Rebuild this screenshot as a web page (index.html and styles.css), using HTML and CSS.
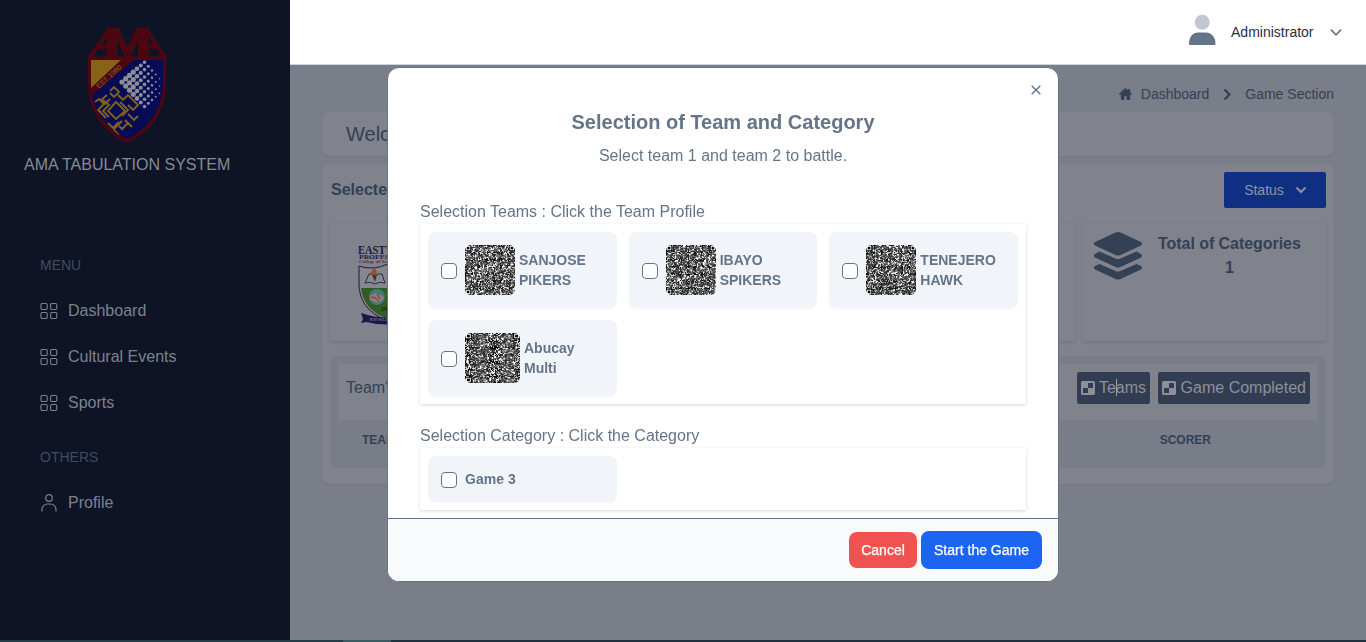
FILE: index.html
```html
<!DOCTYPE html>
<html lang="en">
<head>
<meta charset="utf-8">
<title>AMA Tabulation System</title>
<link rel="stylesheet" href="styles.css">
</head>
<body>
<svg width="0" height="0" class="defs">
  <symbol id="grid" viewBox="0 0 18 18"><g fill="none" stroke="currentColor" stroke-width="1.1"><rect x="1" y="1.500" width="6.200" height="6" rx="1.2"/><rect x="10.600" y="1.500" width="6.200" height="6" rx="1.2"/><rect x="1" y="10.500" width="6.200" height="6" rx="1.2"/><rect x="10.600" y="10.500" width="6.200" height="6" rx="1.2"/></g></symbol>
  <symbol id="chess" viewBox="0 0 14 14"><path fill="currentColor" fill-rule="evenodd" d="M1.5 0h11A1.5 1.5 0 0 1 14 1.500v11a1.500 1.500 0 0 1-1.500 1.500h-11A1.500 1.500 0 0 1 0 12.500v-11A1.500 1.500 0 0 1 1.500 0zM7 2v5h5V2zM2 7v5h5V7z"/></symbol>
  <symbol id="chev" viewBox="0 0 12 8"><path d="M1.500 1.500 6 6l4.500-4.500" fill="none" stroke="currentColor"/></symbol>
</svg>
<div class="app">
  <aside class="sidebar">
    <div class="brand">
      <svg class="crest" viewBox="0 0 80 118" width="80" height="118">
        <defs><clipPath id="shield"><path d="M4 34h72v22C76 82 63 102 40 113 17 102 4 82 4 56z"/></clipPath></defs>
        <g font-family="Liberation Sans" font-size="39" fill="#4b0610" stroke="#4b0610" stroke-width="2.400">
          <text transform="translate(2 30) skewX(-19)" textLength="21" lengthAdjust="spacingAndGlyphs">A</text>
          <text transform="translate(20.500 30)" textLength="39" lengthAdjust="spacingAndGlyphs">M</text>
          <text transform="translate(57 30) skewX(19)" textLength="21" lengthAdjust="spacingAndGlyphs">A</text>
        </g>
        <path d="M1 30.500h78V57C79 85 64 106 40 117 16 106 1 85 1 57z" fill="#4b0610"/>
        <g clip-path="url(#shield)">
          <path d="M4 33h31L4 62z" fill="#876315"/>
          <path d="M48 33h30v84H20L2 72z" fill="#060b55"/>
          <g id="dots" fill="#8b8e99"></g>
          <g fill="none" stroke="#80611c" stroke-width="1.900">
            <path d="m23 65 4-4 5 5-5 5-4-4m-3 2-6 5 4 4 5-5M8 76l4-3 5 5-6 6 8 8m-3-18 6 5-6 6 6 6m-6-2-5-6m20-14 5 5 5-5 10 10-5 5-5-5m-8-3 8 8-6 6m-14 7 6 6 8-8m-13 10 4 4m0-7 6-6m3 7 6-6m-3-3 7 7m-4-13 6 6 4-4m-24 14 5 5m0-9 4 4"/>
            <path d="m29 76 9 9-9 8-8-8z"/>
          </g>
          <path d="m29 78 7 7-7 6-6-6z" fill="#060b55"/>
        </g>
        <text transform="translate(12 63) rotate(-42)" font-family="Liberation Sans" font-size="7" fill="#876a3a" textLength="31">EST. 1980</text>
      </svg>
      <div class="brand-name">AMA TABULATION SYSTEM</div>
    </div>
    <nav>
      <h3>MENU</h3>
      <a><svg width="18" height="18"><use href="#grid"/></svg>Dashboard</a>
      <a><svg width="18" height="18"><use href="#grid"/></svg>Cultural Events</a>
      <a><svg width="18" height="18"><use href="#grid"/></svg>Sports</a>
      <h3 class="others">OTHERS</h3>
      <a><svg width="18" height="18" viewBox="0 0 18 18" fill="none" stroke="currentColor" stroke-width="1.200"><circle cx="9" cy="4" r="3.300"/><path d="M2 17.500v-2A5.500 5.500 0 0 1 7.500 10h3a5.500 5.500 0 0 1 5.500 5.500v2"/></svg>Profile</a>
    </nav>
  </aside>
  <div class="page">
    <header class="topbar">
      <svg width="28" height="32" viewBox="0 0 28 32"><circle cx="14.200" cy="8.300" r="7.500" fill="#c0c6d2"/><path d="M1 30C1 22.500 5 18.500 10 18.500h8c5 0 9.500 4 9.500 11.500q0 1-1 1h-24.500q-1 0-1-1z" fill="#64748b"/></svg>
      <span>Administrator</span>
      <svg class="down" width="14" height="9" viewBox="0 0 12 8"><use href="#chev"/></svg>
    </header>
    <main>
      <div class="crumbs">
        <svg width="13" height="12" viewBox="0 0 14 13"><path fill="currentColor" d="M7 0 0 6.300l.8.900H2V12q0 1 1 1h2.700V9h2.600v4H11q1 0 1-1V7.200h1.200l.8-.9-2-1.800V1h-2v1.700z"/></svg>
        <span>Dashboard</span>
        <svg class="sep" width="9" height="13" viewBox="0 0 9 13"><path d="m1.500 1.500 5 5-5 5" fill="none" stroke="currentColor" stroke-width="2.200"/></svg>
        <span>Game Section</span>
      </div>
      <section class="card welcome">Welcome</section>
      <section class="card board">
        <div class="board-head"><b>Selected</b><button class="status">Status <svg width="12" height="8" stroke-width="2"><use href="#chev"/></svg></button></div>
        <div class="stats">
          <div class="stat school">
            <svg width="70" height="84" viewBox="0 0 70 84">
              <g font-family="Liberation Serif" font-weight="bold"><text x="0" y="10.500" font-size="13" fill="#1d1746" textLength="62" lengthAdjust="spacingAndGlyphs">EASTWOOD</text><text x="1" y="15.500" font-size="6" fill="#1d1746" textLength="59" lengthAdjust="spacingAndGlyphs">PROFESSIONAL</text><text x="1" y="20" font-size="5" fill="#77202c">College of Science and Tech</text></g>
              <path d="M1 23q14 5 29-2 15 7 29 2v17c0 18-9 30-29 38C10 70 1 58 1 40z" fill="#85868e" stroke="#1d1746"/>
              <path d="M3 45h54C55 61 46 70 30 76 14 70 5 61 3 45z" fill="#315d20"/>
              <path d="M7 40 11 31q4-1 6 2 3-3 7-2l3 9q-6-2-10 1-4-3-10-1z" fill="#888992" stroke="#292b42"/>
              <path d="M16 25q4 3 2 7h-4q-2-3 2-7z" fill="#a44b16"/><path d="m14 32 3 7 2-7z" fill="#373a42"/>
              <circle cx="19" cy="54" r="8" fill="#397b82"/><path d="m12 53 5-3 8 3 1 3-6 4-8-3z" fill="#9c7770"/><path d="m13 54 5 1 3 4m-2-8 3 5" stroke="#633e3e" fill="none"/>
              <text x="23" y="68" font-family="Liberation Serif" font-size="6" font-weight="bold" fill="#16213b">1994</text>
              <path d="M3 70q26 9 54 0l2 7q-27 8-51 2l-5 1 2-4z" fill="#1d1746"/><text x="12" y="78" font-family="Liberation Serif" font-size="4" fill="#95959e">KNOWLEDGE</text>
            </svg>
          </div>
          <div class="stat"></div><div class="stat"></div>
          <div class="stat total">
            <svg width="50" height="48" viewBox="0 0 50 48" fill="#334056"><path d="M22.500.6q2.500-1 5 0L48 10q2 1.200 0 3.500L27.500 23q-2.500 1-5 0L2 13.500q-2.200-2.300 0-3.500z"/><path d="m6.500 19.500 16 7q2.500 1 5 0l16-7L48 22q2 1.200 0 3.500L27.500 35q-2.500 1-5 0L2 25.500Q-.2 23.200 2 22z"/><path d="m6.500 32 16 7q2.500 1 5 0l16-7 4.500 2q2 1.200 0 3.500l-20.500 9.500q-2.500 1-5 0L2 37.500Q-.2 35.200 2 34z"/></svg>
            <div>Total of Categories<br>1</div>
          </div>
        </div>
        <div class="table">
          <div class="tools"><span class="tt">Team's</span><span class="pill teams"><svg width="14" height="14"><use href="#chess"/></svg>Teams<i class="caret"></i></span><span class="pill"><svg width="14" height="14"><use href="#chess"/></svg>Game Completed</span></div>
          <div class="thead"><span>TEAM</span><span>SCORER</span></div>
        </div>
      </section>
    </main>
  </div>
</div>
<div class="strip"></div>
<div class="overlay">
  <div class="modal" role="dialog">
    <div class="modal-body">
      <svg class="close" width="10" height="10" viewBox="0 0 10 10"><path d="m.7.7 8.600 8.600m0-8.600L.7 9.300" stroke="#64748b" stroke-width="1.400"/></svg>
      <h2>Selection of Team and Category</h2>
      <p>Select team 1 and team 2 to battle.</p>
      <div class="label">Selection Teams : Click the Team Profile</div>
      <div class="options">
        <label class="opt"><i class="box"></i><canvas class="qr" width="50" height="50"></canvas><span>SANJOSE<br>PIKERS</span></label>
        <label class="opt"><i class="box"></i><canvas class="qr" width="50" height="50"></canvas><span>IBAYO<br>SPIKERS</span></label>
        <label class="opt"><i class="box"></i><canvas class="qr" width="50" height="50"></canvas><span>TENEJERO<br>HAWK</span></label>
        <label class="opt"><i class="box"></i><canvas class="qr" width="55" height="50"></canvas><span>Abucay<br>Multi</span></label>
      </div>
      <div class="label second">Selection Category : Click the Category</div>
      <div class="options"><label class="opt game"><i class="box"></i><span>Game 3</span></label></div>
    </div>
    <footer><button class="cancel">Cancel</button><button class="start">Start the Game</button></footer>
  </div>
</div>
<script src="script.js"></script>
</body>
</html>
```
FILE: styles.css
```css
* { box-sizing: border-box; }
body { margin: 0; height: 642px; overflow: hidden; font-family: "Liberation Sans", Arial, sans-serif; font-size: 16px; line-height: 24px; background: #7a7e88; }
svg { display: block; flex: none; }
button { border: 0; font: inherit; padding: 0; }
.defs { position: absolute; }
.app { display: flex; height: 640px; }
.strip { height: 2px; background: linear-gradient(90deg, #243d46 0 343px, #3c5b60 343px 391px, #20313f 391px); }
.sidebar { width: 290px; background: #0e1425; flex: none; color: #7c828d; }
.brand { padding: 26px 0 0 24px; height: 176px; color: #868a93; }
.crest { margin-left: 63px; overflow: visible; }
.brand-name { margin-top: 9px; white-space: nowrap; }
nav { padding: 79px 24px 0 40px; }
nav h3 { font-size: 14px; line-height: 20px; font-weight: 400; margin: 0 0 24px; color: #414b60; }
nav h3.others { margin-top: 32px; margin-bottom: 24px; }
nav a { display: flex; align-items: center; gap: 10px; height: 24px; margin-bottom: 22px; }
.page { flex: 1; display: flex; flex-direction: column; }
.topbar { height: 65px; background: #fff; border-bottom: 1px solid #cbd5e1; display: flex; align-items: center; justify-content: flex-end; padding-right: 23px; font-size: 14px; color: #27303f; }
.topbar span { margin: 0 15.500px 0 15px; }
.topbar svg:first-child { margin-top: -4px; }
.down { color: #64748b; stroke-width: 1.5; }
main { flex: 1; padding: 19px 32px 0; color: #334056; }
.crumbs { display: flex; height: 20px; align-items: center; justify-content: flex-end; font-size: 14px; line-height: 20px; margin-bottom: 8px; }
.crumbs span:nth-child(2) { margin: 0 14px 0 9px; }
.sep { margin-right: 13px; }
.card { background: #80838b; border-radius: 8px; box-shadow: 0 1px 2px rgba(60,65,75,.14); }
.welcome { height: 44px; padding: 10px 24px; font-size: 20px; margin-bottom: 8px; }
.board { height: 320px; padding: 8px; }
.board-head { display: flex; justify-content: space-between; height: 52px; }
.board-head b { padding: 6px 0 0 1px; }
.status { width: 102px; height: 36px; background: #102f82; border-radius: 2px; display: flex; align-items: center; justify-content: center; gap: 11px; padding-left: 1px; font-size: 14px; color: #9093a0; }
.stats { display: grid; grid-template-columns: repeat(4, 1fr); gap: 8px; height: 117px; }
.stat { box-shadow: 0 1px 3px rgba(40,45,55,.16); min-width: 0; }
.school { padding: 19px 0 0 28px; }
.total { display: flex; padding: 8px 0 0 10px; font-weight: 700; text-align: center; white-space: nowrap; gap: 15px; letter-spacing: -.05px; }
.table { height: 112px; margin-top: 15px; padding: 8px; border-radius: 8px; background: #797d87; }
.tools { height: 56px; padding: 8px; display: flex; gap: 8px; background: #80838b; }
.tt { flex: 1; padding-top: 4px; }
.pill { height: 32px; padding: 0 4px; display: flex; align-items: center; gap: 4.6px; border-radius: 2px; background: #323d54; color: #8d9099; white-space: nowrap; }
.pill.teams { position: relative; gap: 4px; }
.caret { position: absolute; left: 39px; top: 7px; width: 1px; height: 17px; background: #9da0a7; }
.thead { display: flex; justify-content: space-between; padding: 10px 107px 0 24px; font-size: 12px; line-height: 20px; font-weight: 700; }
.overlay { position: fixed; inset: 0 0 auto 290px; padding: 67px 0 0 97px; }
.modal { width: 672px; height: 515px; border: 1px solid #64748b; border-radius: 12px; overflow: hidden; background: #fff; color: #64748b; display: flex; flex-direction: column; }
.modal-body { flex: 1; position: relative; padding: 40px 32px 0; }
.close { position: absolute; right: 17px; top: 17px; }
h2 { margin: 0; font-size: 20px; line-height: 28px; text-align: center; }
.modal p { margin: 8px 0 0; text-align: center; }
.label { margin-top: 32px; }
.label.second { margin-top: 20px; }
.options { width: 606px; padding: 8px; display: grid; grid-template-columns: repeat(3, 1fr); gap: 12px; box-shadow: 0 1px 3px rgba(0,0,0,.16); }
.opt { height: 76px; padding: 0 13px; border-radius: 8px; background: #f1f5f9; box-shadow: 0 1px 2px rgba(0,0,0,.04); display: flex; align-items: center; font-size: 14px; line-height: 20px; font-weight: 700; }
.opt.game { height: 46px; letter-spacing: .05px; }
.opt.game .box { margin-top: 2px; }
.box { width: 16px; height: 16px; border: 1px solid #6b7280; border-radius: 4px; background: #fff; margin: 2px 8px 0 0; flex: none; }
.qr { border-radius: 6px; margin-right: 4px; }
footer { height: 63px; border-top: 1px solid #64748b; background: #f8fafc; display: flex; justify-content: flex-end; align-items: center; gap: 4px; padding-right: 16px; }
footer button { color: #fff; font-size: 14px; border-radius: 8px; -webkit-text-stroke: .25px #fff; }
.cancel { width: 68px; height: 36px; background: #f05252; }
.start { width: 121px; height: 38px; background: #1c64f2; }
```
FILE: script.js
```js
// Dense QR-style codes with corner finder marks
document.querySelectorAll('.qr').forEach((c, k) => {
  const ctx = c.getContext('2d'), n = 57, w = c.width / n, h = c.height / n;
  let s = 7919 * (k + 3);
  const rnd = () => (s = (s * 1103515245 + 12345) % 2147483648) / 2147483648;
  const box = (x, y, a, col) => { ctx.fillStyle = col; ctx.fillRect(x * w, y * h, a * w, a * h); };
  box(0, 0, n, '#fff');
  for (let y = 0; y < n; y++) for (let x = 0; x < n; x++) if (rnd() < .56) box(x, y, 1.15, '#000');
  [[0, 0], [n - 7, 0], [0, n - 7]].forEach(([x, y]) => {
    box(x, y, 7, '#000'); box(x + 1, y + 1, 5, '#fff'); box(x + 2, y + 2, 3, '#000');
  });
});

// Halftone diamond that fades to the right of the crest
const dots = document.getElementById('dots');
for (let i = 0; i < 7; i++) for (let j = 0; j < 7; j++) {
  const x = 35 + (i + j) * 3.75, y = 56 - i * 3.3 + j * 4.1;
  if (x > 74) continue;
  const c = document.createElementNS('http://www.w3.org/2000/svg', 'circle');
  c.setAttribute('cx', x); c.setAttribute('cy', y);
  c.setAttribute('r', Math.max(.8, 2.6 - Math.max(0, x - 46) * .07));
  dots.appendChild(c);
}
```
